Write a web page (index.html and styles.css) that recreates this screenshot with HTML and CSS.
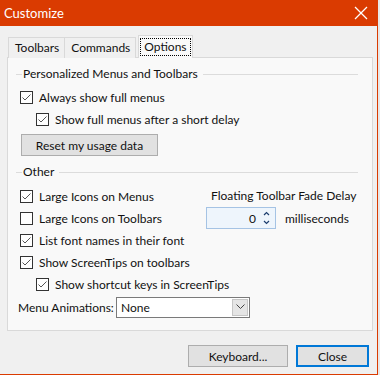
FILE: index.html
```html
<!DOCTYPE html>
<html>
<head>
    <title>Customize</title>
    <link rel="stylesheet" href="styles.css">
</head>
<body>
    <div class="dialog">
        <div class="titlebar">
            <span class="title">Customize</span>
            <svg class="close-x" width="14" height="14" viewBox="0 0 14 14" fill="none" stroke="#fff" stroke-width="1.3">
                <line x1="1" y1="1" x2="13" y2="13"></line>
                <line x1="13" y1="1" x2="1" y2="13"></line>
            </svg>
        </div>

        <div class="tabs">
            <div class="tab">Toolbars</div>
            <div class="tab">Commands</div>
            <div class="tab active"><span class="focus">Options</span></div>
        </div>

        <div class="panel">
            <div class="group-title">Personalized Menus and Toolbars</div>
            <div class="row">
                <span class="box checked"><svg width="11" height="11" viewBox="0 0 11 11" fill="none" stroke="#555" stroke-width="1"><polyline points="1.5,5.5 4,8 9.5,2.5"></polyline></svg></span>
                Always show full menus
            </div>
            <div class="row sub">
                <span class="box checked"><svg width="11" height="11" viewBox="0 0 11 11" fill="none" stroke="#555" stroke-width="1"><polyline points="1.5,5.5 4,8 9.5,2.5"></polyline></svg></span>
                Show full menus after a short delay
            </div>
            <button class="btn reset">Reset my usage data</button>

            <div class="group-title other">Other</div>
            <div class="other-body">
                <div class="col-left">
                    <div class="row">
                        <span class="box checked"><svg width="11" height="11" viewBox="0 0 11 11" fill="none" stroke="#555" stroke-width="1"><polyline points="1.5,5.5 4,8 9.5,2.5"></polyline></svg></span>
                        Large Icons on Menus
                    </div>
                    <div class="row">
                        <span class="box"></span>
                        Large Icons on Toolbars
                    </div>
                    <div class="row">
                        <span class="box checked"><svg width="11" height="11" viewBox="0 0 11 11" fill="none" stroke="#555" stroke-width="1"><polyline points="1.5,5.5 4,8 9.5,2.5"></polyline></svg></span>
                        List font names in their font
                    </div>
                    <div class="row">
                        <span class="box checked"><svg width="11" height="11" viewBox="0 0 11 11" fill="none" stroke="#555" stroke-width="1"><polyline points="1.5,5.5 4,8 9.5,2.5"></polyline></svg></span>
                        Show ScreenTips on toolbars
                    </div>
                    <div class="row sub">
                        <span class="box checked"><svg width="11" height="11" viewBox="0 0 11 11" fill="none" stroke="#555" stroke-width="1"><polyline points="1.5,5.5 4,8 9.5,2.5"></polyline></svg></span>
                        Show shortcut keys in ScreenTips
                    </div>
                </div>
                <div class="col-right">
                    <div class="fade-label">Floating Toolbar Fade Delay</div>
                    <div class="spin-row">
                        <div class="spin">
                            <span class="spin-value">0</span>
                            <svg class="spin-arrows" width="7" height="16" viewBox="0 0 7 16" fill="none" stroke="#1c3d6e" stroke-width="1.2">
                                <polyline points="1,5 3.5,2.5 6,5"></polyline>
                                <polyline points="1,11 3.5,13.5 6,11"></polyline>
                            </svg>
                        </div>
                        <span>milliseconds</span>
                    </div>
                </div>
            </div>

            <div class="anim-row">
                <span class="anim-label">Menu Animations:</span>
                <div class="select">
                    <span>None</span>
                    <span class="drop">
                        <svg width="9" height="6" viewBox="0 0 9 6" fill="none" stroke="#444" stroke-width="1"><polyline points="0.5,0.5 4.5,4.5 8.5,0.5"></polyline></svg>
                    </span>
                </div>
            </div>
        </div>

        <div class="footer">
            <button class="btn keyboard">Keyboard...</button>
            <button class="btn close">Close</button>
        </div>
    </div>
</body>
</html>
```

FILE: styles.css
```css
:root {
    --accent: #da3b01;
    --face: #f0f0f0;
    --panel: #f9f9f9;
    --line: #d9d9d9;
    --text: #111;
}

* {
    margin: 0;
    padding: 0;
    box-sizing: border-box;
}

body {
    font-family: 'Lato', 'Liberation Sans', sans-serif;
    font-size: 12px;
    color: var(--text);
    background: #e8e8e8;
    white-space: nowrap;
}

.dialog {
    width: 378px;
    height: 375px;
    background: var(--face);
    border-right: 1px solid var(--accent);
    border-bottom: 1px solid var(--accent);
}

.titlebar {
    height: 26px;
    background: var(--accent);
    color: #fff;
    display: flex;
    align-items: center;
    justify-content: space-between;
    padding: 0 9px 0 4px;
}

.title {
    font-size: 13px;
}

/* tabs */
.tabs {
    display: flex;
    align-items: flex-end;
    height: 31px;
    padding-left: 8px;
    position: relative;
    z-index: 1;
}

.tab {
    height: 21px;
    padding: 0 5px 0 6px;
    border: 1px solid var(--line);
    border-bottom: none;
    background: var(--face);
    line-height: 20px;
    margin-bottom: -1px;
}

.tab + .tab {
    border-left: none;
}

.tab.active {
    height: 23px;
    padding: 1px 1px 0;
    margin-left: 2px;
    border-left: 1px solid var(--line);
    background: var(--panel);
}

.focus {
    display: inline-block;
    padding: 0 4px;
    line-height: 18px;
    outline: 1px dotted #000;
    outline-offset: -1px;
}

/* panel */
.panel {
    margin-left: 7px;
    width: 366px;
    height: 274px;
    border: 1px solid var(--line);
    background: var(--panel);
    padding: 8px 14px 0 8px;
}

.group-title {
    display: flex;
    align-items: center;
    gap: 1px;
    height: 16px;
    line-height: 16px;
}

.group-title::before {
    content: "";
    width: 6px;
    border-top: 1px solid #dcdcdc;
}

.group-title::after {
    content: "";
    flex: 1;
    margin-left: 4px;
    border-top: 1px solid #dcdcdc;
}

.group-title.other {
    margin-top: 8px;
}

.row {
    display: flex;
    align-items: center;
    gap: 6px;
    height: 22px;
    padding-left: 4px;
}

.group-title + .row {
    margin-top: 4px;
}

.row.sub {
    padding-left: 20px;
}

.box {
    width: 13px;
    height: 13px;
    border: 1px solid #333;
    background: #fff;
    display: flex;
    align-items: center;
    justify-content: center;
    flex-shrink: 0;
}

.btn {
    font-family: inherit;
    font-size: 12px;
    color: var(--text);
    background: #e1e1e1;
    border: 1px solid #adadad;
    height: 22px;
}

.reset {
    display: block;
    width: 137px;
    margin: 4px 0 0 5px;
}

.other-body {
    display: flex;
    margin-top: 5px;
}

.col-left {
    width: 190px;
}

.col-right {
    padding-top: 3px;
}

.fade-label {
    padding-left: 5px;
    line-height: 16px;
}

.spin-row {
    display: flex;
    align-items: center;
    gap: 9px;
    margin-top: 3px;
}

.spin {
    width: 70px;
    height: 22px;
    background: #eef5fc;
    border: 1px solid #a5c3e4;
    display: flex;
    align-items: center;
    justify-content: flex-end;
    gap: 7px;
    padding-right: 5px;
}

.anim-row {
    display: flex;
    align-items: center;
    height: 22px;
    margin-top: 1px;
    padding-left: 2px;
}

.anim-label {
    width: 98px;
}

.select {
    width: 134px;
    height: 21px;
    background: #fff;
    border: 1px solid #7a7a7a;
    display: flex;
    align-items: center;
    justify-content: space-between;
    padding: 0 1px 0 4px;
}

.drop {
    width: 16px;
    height: 17px;
    background: #e5e5e5;
    border: 1px solid #c6c6c6;
    display: flex;
    align-items: center;
    justify-content: center;
}

/* footer */
.footer {
    display: flex;
    justify-content: flex-end;
    gap: 8px;
    padding: 14px 8px 0 0;
}

.keyboard {
    width: 100px;
}

.close {
    width: 73px;
    border: 2px solid #0078d7;
}
```
